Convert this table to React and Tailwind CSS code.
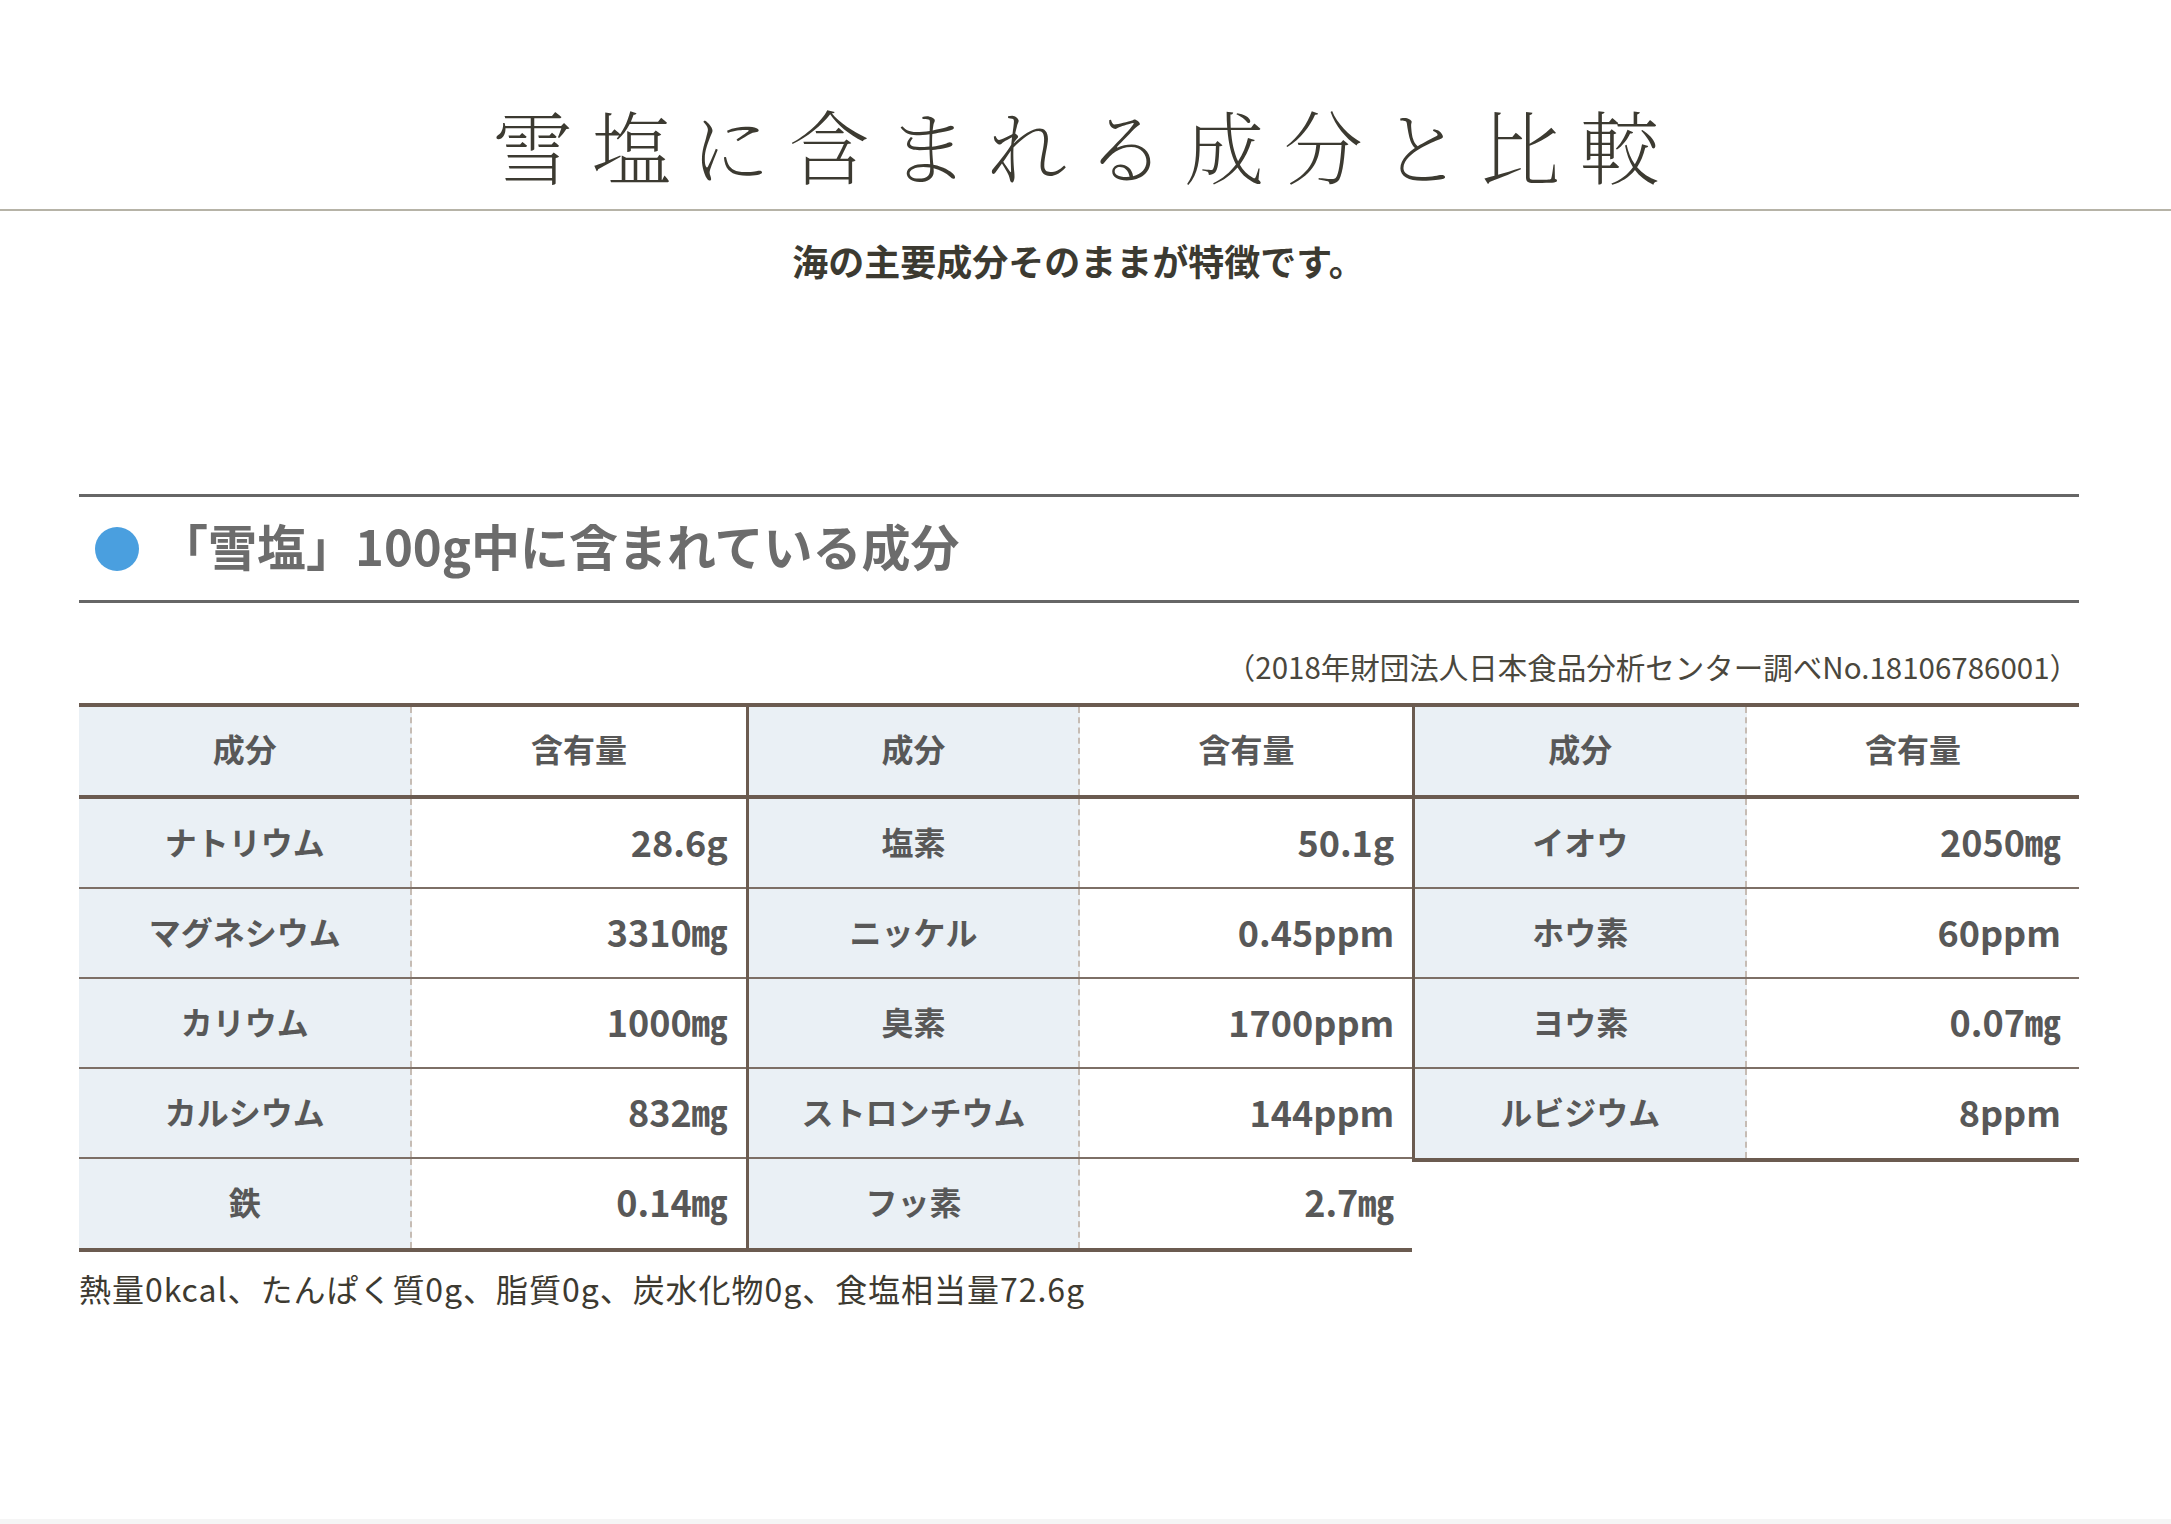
const groups = [
  [
    ['ナトリウム', '28.6g'],
    ['マグネシウム', '3310㎎'],
    ['カリウム', '1000㎎'],
    ['カルシウム', '832㎎'],
    ['鉄', '0.14㎎'],
  ],
  [
    ['塩素', '50.1g'],
    ['ニッケル', '0.45ppm'],
    ['臭素', '1700ppm'],
    ['ストロンチウム', '144ppm'],
    ['フッ素', '2.7㎎'],
  ],
  [
    ['イオウ', '2050㎎'],
    ['ホウ素', '60ppm'],
    ['ヨウ素', '0.07㎎'],
    ['ルビジウム', '8ppm'],
  ],
]

function Group({ rows, first }) {
  return (
    <div
      className={
        'border-y-4 border-[#6b5b50] ' + (first ? '' : 'border-l-[3px]')
      }
    >
      <div className="grid h-[92px] grid-cols-2 border-b-4 border-[#6b5b50] text-[32px] font-bold text-[#585858]">
        <div className="flex items-center justify-center border-r-2 border-dashed border-[#c6bcb4] bg-[#eaf0f5] pb-[6px]">
          成分
        </div>
        <div className="flex items-center justify-center pb-[6px]">含有量</div>
      </div>
      {rows.map(([name, value], i) => (
        <div
          key={name}
          className={
            'grid grid-cols-2 font-bold text-[#585858] ' +
            (i < rows.length - 1 ? 'h-[90px] border-b-2 border-[#7d6f66]' : 'h-[89px]')
          }
        >
          <div className="flex items-center justify-center border-r-2 border-dashed border-[#c6bcb4] bg-[#eaf0f5] pb-[5px] text-[32px]">
            {name}
          </div>
          <div className="flex items-center justify-end pr-[18px] pb-[5px] text-[36px]">{value}</div>
        </div>
      ))}
    </div>
  )
}

export default function App() {
  return (
    <div
      className="h-[1524px] w-full overflow-hidden bg-white"
      style={{ fontFamily: '"Noto Sans CJK JP", "Noto Sans", sans-serif' }}
    >
      <h1
        className="pt-[104px] text-center text-[80px] leading-[80px] font-extralight tracking-[0.235em] text-[#3c3a31]"
        style={{ fontFamily: '"Noto Serif CJK JP", "Noto Sans CJK JP", serif' }}
      >
        雪塩に含まれる成分と比較
      </h1>
      <div className="mt-[25px] h-[2px] bg-[#b6b3a7]" />
      <p className="mt-[31px] pr-[14px] text-center text-[36px] leading-[36px] font-bold text-[#3c3a31]">
        海の主要成分そのままが特徴です。
      </p>

      <section className="mt-[216px] ml-[79px] w-[2000px]">
        <h2 className="flex h-[109px] items-center gap-[20px] border-y-[3px] border-[#666666] pl-[16px] text-[49px] font-bold text-[#6c6c6c]">
          <span className="h-[44px] w-[44px] rounded-full bg-[#4a9fdf]" />
          <span className="pb-[8px]">「雪塩」100g中に含まれている成分</span>
        </h2>

        <p className="mt-[48px] text-right text-[29.5px] leading-[30px] text-[#4a473d]">
          （2018年財団法人日本食品分析センター調べNo.18106786001）
        </p>

        <div className="mt-[22px] grid grid-cols-3 items-start">
          {groups.map((rows, i) => (
            <Group key={i} rows={rows} first={i === 0} />
          ))}
        </div>

        <p className="mt-[20px] text-[32px] leading-[32px] tracking-[0.03em] text-[#3d3a31]">
          熱量0kcal、たんぱく質0g、脂質0g、炭水化物0g、食塩相当量72.6g
        </p>
      </section>

      <div className="mt-[215px] h-[20px] bg-[#f5f5f5]" />
    </div>
  )
}
